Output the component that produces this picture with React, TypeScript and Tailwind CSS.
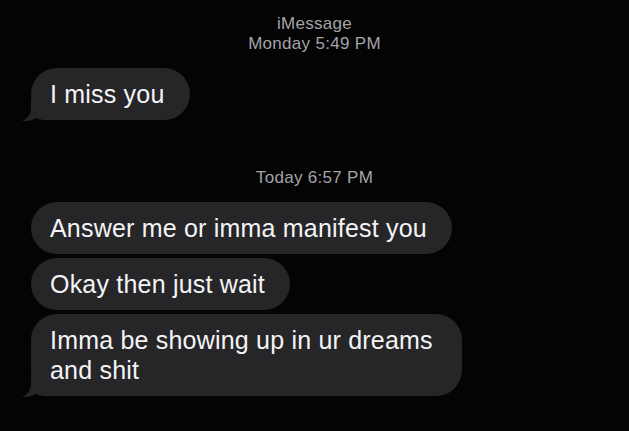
import React from "react";

type Msg = { text: string; tail?: boolean };

const Tail = () => (
	<svg
		className="absolute left-[-9px] bottom-[-1px]"
		width="38"
		height="22"
		viewBox="0 0 38 22"
	>
		<path
			d="M9 0 L9 9 C9 15 6 19.5 0 22 C6 22.3 11 21 14.5 19 C17 20.5 20 21 24 21 L38 21 L38 0 Z"
			fill="#262629"
		/>
	</svg>
);

const Bubble = ({ text, tail }: Msg) => (
	<div className="relative max-w-[431px] rounded-[26px] bg-[#262629] pl-[19px] pr-[25px] py-[11px] text-[25px] leading-[30px] tracking-[0.2px] text-[#f4f4f6]">
		{tail && <Tail />}
		<span className="relative">{text}</span>
	</div>
);

const Stamp = ({ children }: { children: React.ReactNode }) => (
	<div className="text-center text-[17px] leading-[20px] tracking-[0.3px] text-[#a3a3a8]">
		{children}
	</div>
);

export default function App() {
	const today: Msg[] = [
		{ text: "Answer me or imma manifest you" },
		{ text: "Okay then just wait" },
		{ text: "Imma be showing up in ur dreams and shit", tail: true },
	];

	return (
		<div
			className="w-[629px] h-[431px] overflow-hidden bg-[#040405] pt-[14px]"
			style={{ fontFamily: '"Liberation Sans", Arial, sans-serif' }}
		>
			<Stamp>iMessage</Stamp>
			<Stamp>Monday 5:49 PM</Stamp>

			<div className="flex flex-col items-start pl-[31px] mt-[14px]">
				<Bubble text="I miss you" tail />
			</div>

			<div className="mt-[48px]">
				<Stamp>Today 6:57 PM</Stamp>
			</div>

			<div className="flex flex-col items-start gap-[4px] pl-[31px] mt-[14px]">
				{today.map((m, i) => (
					<Bubble key={i} text={m.text} tail={m.tail} />
				))}
			</div>
		</div>
	);
}
